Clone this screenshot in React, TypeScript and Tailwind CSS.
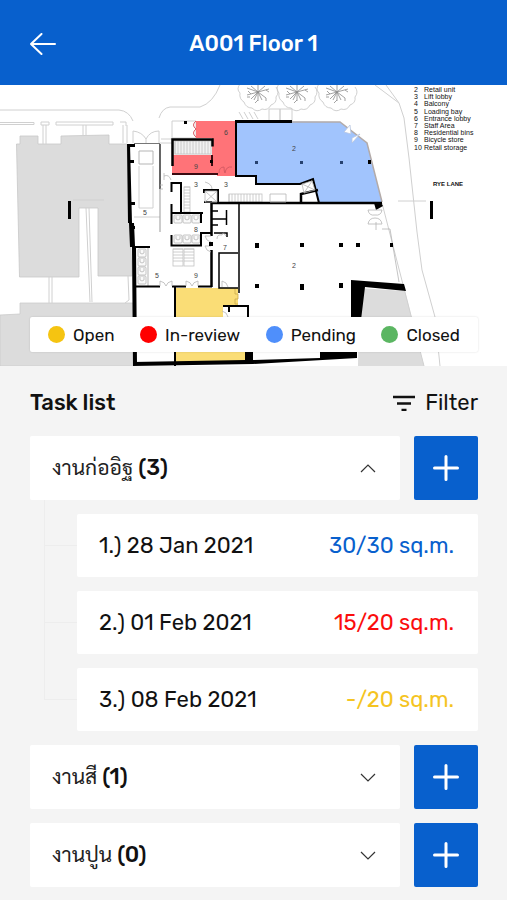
import { useState } from "react";

type Task = { id: number; date: string; amount: string; tone: string };
type Group = { name: string; count: number; tasks: Task[] };

const legend = [
  { label: "Open", dot: "bg-[#f5c411]" },
  { label: "In-review", dot: "bg-[#ff0000]" },
  { label: "Pending", dot: "bg-[#4f8ffb]" },
  { label: "Closed", dot: "bg-[#5bb662]" },
];

const groups: Group[] = [
  {
    name: "งานก่ออิฐ",
    count: 3,
    tasks: [
      { id: 1, date: "28 Jan 2021", amount: "30/30 sq.m.", tone: "text-[#0860cd]" },
      { id: 2, date: "01 Feb 2021", amount: "15/20 sq.m.", tone: "text-[#fb0d0d]" },
      { id: 3, date: "08 Feb 2021", amount: "-/20 sq.m.", tone: "text-[#f5c422]" },
    ],
  },
  { name: "งานสี", count: 1, tasks: [] },
  { name: "งานปูน", count: 0, tasks: [] },
];

const rooms = [
  ["2", "Retail unit"],
  ["3", "Lift lobby"],
  ["4", "Balcony"],
  ["5", "Loading bay"],
  ["6", "Entrance lobby"],
  ["7", "Staff Area"],
  ["8", "Residential bins"],
  ["9", "Bicycle store"],
  ["10", "Retail storage"],
];

const marks: [number, number, string][] = [
  [226, 135, "6"], [196, 169, "9"], [294, 151, "2"], [196, 187, "3"], [226, 187, "3"],
  [145, 215, "5"], [196, 232, "8"], [225, 250, "7"], [157, 278, "5"], [196, 278, "9"], [294, 268, "2"],
];

const columns: [number, number, number, number][] = [
  [255, 161, 3, 3], [300, 161, 3, 3], [340, 161, 3, 3], [368, 160, 3, 4],
  [255, 243, 4, 5], [300, 243, 4, 4], [339, 243, 4, 4], [356, 243, 4, 4], [390, 243, 3, 4],
  [255, 284, 4, 4], [300, 284, 4, 6], [339, 283, 4, 5], [209, 242, 4, 4], [184, 121, 3, 3], [210, 160, 3, 3],
];

function Tree({ x }: { x: number }) {
  return (
    <g transform={`translate(${x} 92)`} fill="none" stroke="#c4c4c4" strokeWidth="0.8">
      <path d="M-18-8q-4 5 0 9-1 6 4 9 2 6 8 6 5 5 10 1 6 2 9-4 6-2 5-8 4-5 0-10" />
      <path
        stroke="#8b8b8b"
        d="M-11-4L0 0l-7 7M0 0l0 9M0 0l8 6M0 0l11-3M0 0l-11 3M0 0l4 8M0 0l-4 8M-7-6L0 0l7-6M0 0v-7M-8 5l-3 0M8 6l0 3M0 8l-3 3M-7 2l-3-3M8-2l3 2"
      />
    </g>
  );
}

function Bins({ x, y, n, down }: { x: number; y: number; n: number; down?: boolean }) {
  return (
    <g fill="#fafafa" stroke="#b5b5b5" strokeWidth="0.8">
      {Array.from({ length: n }, (_, i) => (
        <g key={i} transform={`translate(${x + (down ? 0 : i * 9)} ${y + (down ? i * 9 : 0)})`}>
          <rect width="8" height="8" rx="1" />
          <path d="M2 1v3q2 2 4 0V1" fill="none" />
        </g>
      ))}
    </g>
  );
}

function Hatch({ x, y, w, h, step = 3 }: { x: number; y: number; w: number; h: number; step?: number }) {
  const wide = w >= h;
  const n = Math.floor((wide ? w : h) / step);
  return (
    <g stroke="#c2c2c2" strokeWidth="0.8" fill="none">
      <rect x={x} y={y} width={w} height={h} />
      {Array.from({ length: n }, (_, i) => (
        <path key={i} d={wide ? `M${x + i * step} ${y}v${h}` : `M${x} ${y + i * step}h${w}`} />
      ))}
    </g>
  );
}

function FloorPlan() {
  return (
    <svg
      viewBox="0 85 507 281"
      className="block w-full bg-white font-['Liberation_Sans',sans-serif]"
      role="img"
      aria-label="Floor plan"
    >
      {/* neighbouring buildings */}
      <path
        d="M20 136h18v8h23v-8l48-1v9h18l5 132H98v-68H79v69H19.500l-3-133h3.500z"
        fill="#dcdcdc"
        stroke="#c8c8c8"
        strokeWidth="0.8"
      />
      <path d="M0 315l20-1v-11h113v63H0z" fill="#dcdcdc" stroke="#cbcbcb" strokeWidth="0.8" />
      <path d="M359 288l46 3 19 75h-66z" fill="#dcdcdc" />

      {/* kerbs and street lines */}
      <g fill="none" stroke="#d0d0d0" strokeWidth="1">
        <path d="M0 110h119q10 1 14 11M159 118q3-10 11-11h30q13-4 20-22M0 122.500h34v2H0M56 122h57v3H56zM41 122h8v3h-8zM43 125v19m3-19v19M83 125v11m3-11v11M120 122h6v4m-3-1v18m4-18v18" />
        <path d="M73 200h31M86 208l4 94M89 208l3 94M49 277v26m3-26v26M128 276l1 24-4 3" />
        <path d="M375 85l24 18 5 15 5 40 8 74 5 38 13 47 5 49M386 85l13 18M398 201h28M382 203l42 163" />
        <path d="M133 143v-12q9 1 13 8 4-8 13-8v12M146 139v4M239 112l4 7m1-7l4 7m1-7l4 7m1-7l4 7M269 109h11v12h-11zM280 109h12v12h-12zM172 121h24v17h-24zM161 139h11m-12 4h12" />
        <path d="M139 166v42h14v-42M134 217h26" />
        <path d="M160 189v43" stroke="#999" />
      </g>
      <path d="M139 151h14v13h-14z" fill="none" stroke="#b5b5b5" />
      {[258, 297, 337].map((x) => <Tree key={x} x={x} />)}

      {/* status areas */}
      <path d="M196 121h40v55h-19v-2h-45v-19h40v-17h-16z" fill="#ff7378" />
      <path d="M236 121l104 1 27 21 15 60h-63l-6-24-13 5h-44v-8h-20z" fill="#a1c4fd" />
      <path d="M175 288h63v18h-15v11l25 4v41l-73 2z" fill="#fadd76" />
      <path d="M270 122h70l27 21 15 59" fill="none" stroke="#b3aba9" strokeWidth="1.500" />
      <path d="M344 132l6-7 1 9zM352 138l8-4-8 9z" fill="white" stroke="#b5c4df" strokeWidth="0.8" />
      <path d="M196 121q-5 4 0 8-5 4 0 8M219 173q0-6 5-6 0 5 1 6 1-7 7-6" fill="none" stroke="#d65b64" />

      {/* fittings */}
      <rect x="172" y="141" width="40" height="14" fill="#f2f2f2" />
      <Hatch x={175} y={141} w={36} h={13} />
      <Hatch x={184} y={187} w={6} h={25} />
      <Hatch x={229} y={194} w={33} h={8} />
      <Hatch x={173} y={249} w={10} h={17} />
      <Hatch x={184} y={249} w={10} h={17} />
      <Bins x={174} y={215} n={3} />
      <Bins x={174} y={235} n={3} />
      <Bins x={138} y={249} n={4} down />
      <path d="M148 248v38" stroke="#b5b5b5" />

      {/* outer and inner walls */}
      <path d="M127 144h3l2 79h2l1 23h1l1 119h-4l-1-118h-2l-1-24h-1z" />
      <path d="M130 144h5v3h-5zM130 160h4v3h-4zM130 202h5v3h-5zM130 226h5v3h-5z" />
      <g fill="none" stroke="#000" strokeWidth="2">
        <path d="M134 143.500h26" stroke="#777" strokeWidth="1" />
        <path d="M160 144v45" stroke="#333" strokeWidth="1.500" />
        <path d="M172.500 166v-26.500h40v7" strokeWidth="2.500" />
        <path d="M212 155v11M172 174h46" stroke="#3a0a10" />
        <path d="M236 122v54h20v8h44l13-5 6 24" />
        <path d="M235 121.500h57" strokeWidth="3" />
        <path d="M301 203v-9l17-4M211 203h171" strokeWidth="2.500" />
        <path d="M171.500 192v-9h9.500v29M171.500 204v20M171 213h32m-2 0v10" />
        <path d="M171.500 235v10.500H201V233h11" />
        <path d="M211.500 203v33M211.500 250v37" strokeWidth="2.500" />
        <path d="M203 190h15v12M204 190v3M204 202h8" />
        <path d="M239 204v89M226.500 210v15M212 219h14M212 211h6m-6 14h6M214 233h13v4M238 253h-19v35h19" strokeWidth="1.500" />
        <path d="M134 247h16M134 286.500h26M172 286.500h14M198 286.500h14M175 287v79M223 306h25v15M229 306v6" />
      </g>
      <path d="M374 203h7l2 3-7 4z" />
      <path d="M351 280l53 4 2 7-41-4-4 33h-10z" />
      <path d="M133 362l112-2v-9h8v9l67-2v-6h37v6l-104 6-120 2z" />

      {/* shafts and door swings */}
      <g fill="none" stroke="#b5b5b5" strokeWidth="0.8">
        <path d="M205 191h12v11h-12zl12 11m0-11l-12 11M302 184l10-3 3 9-11 3zM302 184l13 6m-3-9l-8 12" />
        <path d="M160 286v-5q5 1 6 5 1-4 6-5v5M186 286v-5q5 1 6 5 1-4 6-5v5M222 287v-6q5 1 6 6M217 239q0-5 5-4 1-4 4 1M205 182q7 2 7 7M164 180v-7m0 3q5-2 7 4" />
        <path d="M235 289v5h3v5h-3v5h3" stroke="#c9a94b" />
        <path d="M222 311q5 1 6 6M368 210q1 6 7 5 6 1 7-5zM368 224q1-6 7-6 6 0 7 6zM376 222v8M382 229h8l9 53" />
        <path d="M270 194h16v8h-16zM211 236h-6q1 5 6 6M211 246h-6q1 5 6 6M160 185h3m-3 4h3" />
      </g>

      {columns.map(([x, y, w, h]) => (
        <rect key={`${x}-${y}`} x={x} y={y} width={w} height={h} fill={y === 161 ? "#26416f" : "#000"} />
      ))}
      <path d="M68 201h3v18h-3zM430 201h3v18h-3z" />

      <g fontSize="7" fill="#444" textAnchor="middle">
        {marks.map(([x, y, n]) => <text key={`${x}-${y}`} x={x} y={y}>{n}</text>)}
      </g>
      <g fontSize="7" fill="#111">
        {rooms.map(([n, label], i) => (
          <g key={n}>
            <text x="414" y={92 + i * 7.2}>{n}</text>
            <text x="424" y={92 + i * 7.2}>{label}</text>
          </g>
        ))}
      </g>
      <text x="433" y="186" fontSize="6" fontWeight="700" fill="#111">RYE LANE</text>
    </svg>
  );
}

function Chevron({ up }: { up: boolean }) {
  return (
    <svg viewBox="0 0 16 16" className="size-4 shrink-0" fill="none" stroke="#333" strokeWidth="1.200" aria-hidden="true">
      <path d={up ? "M1 12l7-7 7 7" : "M1 5l7 7 7-7"} />
    </svg>
  );
}

function TaskGroup({ group }: { group: Group }) {
  const [open, setOpen] = useState(group.tasks.length > 0);
  return (
    <section>
      <div className="flex gap-3.5">
        <button
          type="button"
          aria-expanded={open}
          onClick={() => setOpen(!open)}
          className="flex h-16 min-w-0 flex-1 items-center justify-between rounded-xs bg-white pr-6 pl-5.5 text-left"
        >
          <span className="text-[22px] leading-7 font-medium">
            <span className="text-[21px] font-normal text-[#222]">{group.name}</span> ({group.count})
          </span>
          <Chevron up={open} />
        </button>
        <button
          type="button"
          aria-label="Add task"
          className="flex size-16 shrink-0 items-center justify-center rounded-xs bg-[#0860cd] text-white"
        >
          <svg viewBox="0 0 26 26" className="size-6.5" stroke="currentColor" strokeWidth="3" strokeLinecap="round" aria-hidden="true">
            <path d="M13 1.500v23M1.500 13h23" />
          </svg>
        </button>
      </div>
      {open && group.tasks.length > 0 && (
        <ul className="ml-3.5">
          {group.tasks.map((task, i) => (
            <li key={task.id} className="flex">
              <div className="flex w-[33px] shrink-0 flex-col">
                <div className="h-[46px] border-b border-l border-[#ededed]" />
                {i < group.tasks.length - 1 && <div className="flex-1 border-l border-[#ededed]" />}
              </div>
              <div className="mt-3.5 flex h-[63px] min-w-0 flex-1 items-center justify-between rounded-xs bg-white pr-6 pl-5.5 text-[22px] leading-7">
                <span>{task.id}.) {task.date}</span>
                <span className={task.tone}>{task.amount}</span>
              </div>
            </li>
          ))}
        </ul>
      )}
    </section>
  );
}

export default function App() {
  return (
    <div className="min-h-screen bg-[#f4f4f4] pb-3.5 font-[Rubik,Sarabun,'Noto_Sans_Thai_Looped',Roboto,sans-serif] text-[#111]">
      <header className="grid h-[85px] grid-cols-[1fr_auto_1fr] items-center bg-[#0860cd] px-7.5 pt-0.5 text-white">
        <button type="button" aria-label="Back" className="w-fit">
          <svg viewBox="0 0 26 22" className="h-5.5 w-6.5" fill="none" stroke="currentColor" strokeWidth="2" strokeLinecap="round" strokeLinejoin="round" aria-hidden="true">
            <path d="M11.500 1L1 11l10.500 10M1 11h24" />
          </svg>
        </button>
        <h1 className="text-[22px] leading-7 font-medium">A001 Floor 1</h1>
      </header>

      <main>
        <div className="relative">
          <FloorPlan />
          <ul className="absolute right-[29px] bottom-3.5 left-7.5 flex h-[35px] items-center justify-between rounded-xs bg-white px-[18px] text-[17px] leading-5 shadow-[0_0_2px_rgba(0,0,0,0.15)]">
            {legend.map(({ label, dot }) => (
              <li key={label} className="flex items-center gap-2">
                <span className={`size-[17px] rounded-full ${dot}`} />
                {label}
              </li>
            ))}
          </ul>
        </div>

        <div className="pr-[29px] pl-7.5">
          <div className="flex h-[70px] items-center justify-between pt-1 text-[22px] leading-7">
            <h2 className="font-medium">Task list</h2>
            <button type="button" className="flex items-center gap-2.5">
              <svg viewBox="0 0 22 16" className="h-4 w-5.5" stroke="currentColor" strokeWidth="2.500" aria-hidden="true">
                <path d="M0 2h22M4 8.500h14M8.500 15h5" />
              </svg>
              Filter
            </button>
          </div>
          <div className="flex flex-col gap-3.5">
            {groups.map((group) => <TaskGroup key={group.name} group={group} />)}
          </div>
        </div>
      </main>
    </div>
  );
}
